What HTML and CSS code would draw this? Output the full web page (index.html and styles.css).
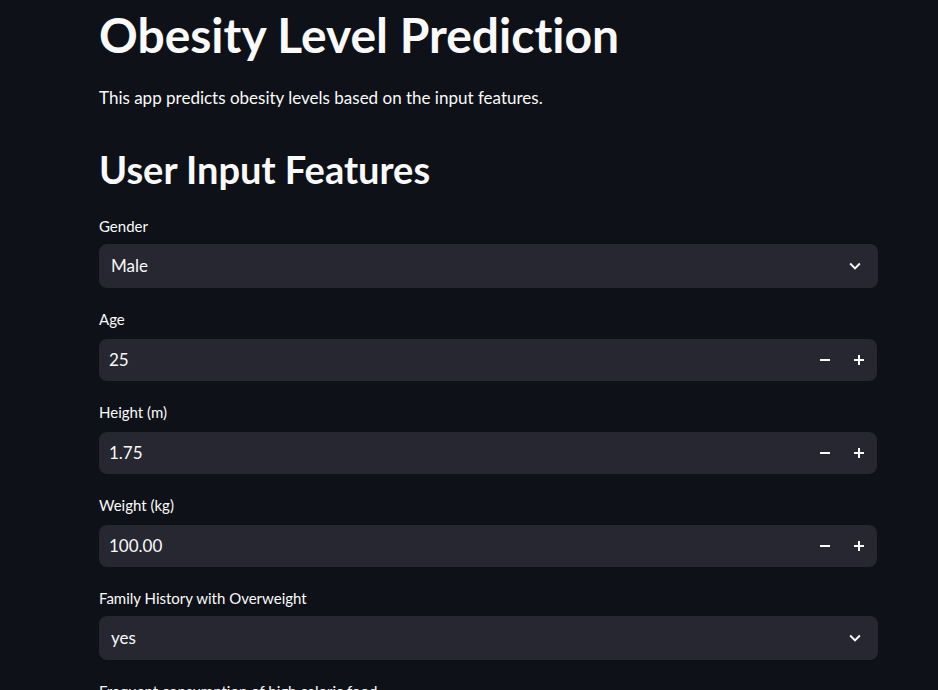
FILE: index.html
```html
<!DOCTYPE html>
<html>
<head>
<meta charset="utf-8">
<link rel="stylesheet" href="styles.css">
</head>
<body>
<main class="app">
  <h1 class="title">Obesity Level Prediction</h1>
  <p class="intro">This app predicts obesity levels based on the input features.</p>
  <h2 class="subtitle">User Input Features</h2>

  <div class="widget">
    <label class="label">Gender</label>
    <div class="select">
      <span class="value">Male</span>
      <svg class="chevron" viewBox="0 0 24 24" width="22" height="22"><path d="M7.41 8.59L12 13.17l4.59-4.58L18 10l-6 6-6-6 1.41-1.41z" fill="#fafafa"/></svg>
    </div>
  </div>

  <div class="widget">
    <label class="label">Age</label>
    <div class="number">
      <span class="value">25</span>
      <div class="steps">
        <span class="step"><svg viewBox="0 0 10 10" width="10" height="10"><rect x="0" y="4" width="10" height="2" fill="#fafafa"/></svg></span>
        <span class="step"><svg viewBox="0 0 10 10" width="10" height="10"><rect x="0" y="4" width="10" height="2" fill="#fafafa"/><rect x="4" y="0" width="2" height="10" fill="#fafafa"/></svg></span>
      </div>
    </div>
  </div>

  <div class="widget">
    <label class="label">Height (m)</label>
    <div class="number">
      <span class="value">1.75</span>
      <div class="steps">
        <span class="step"><svg viewBox="0 0 10 10" width="10" height="10"><rect x="0" y="4" width="10" height="2" fill="#fafafa"/></svg></span>
        <span class="step"><svg viewBox="0 0 10 10" width="10" height="10"><rect x="0" y="4" width="10" height="2" fill="#fafafa"/><rect x="4" y="0" width="2" height="10" fill="#fafafa"/></svg></span>
      </div>
    </div>
  </div>

  <div class="widget">
    <label class="label">Weight (kg)</label>
    <div class="number">
      <span class="value">100.00</span>
      <div class="steps">
        <span class="step"><svg viewBox="0 0 10 10" width="10" height="10"><rect x="0" y="4" width="10" height="2" fill="#fafafa"/></svg></span>
        <span class="step"><svg viewBox="0 0 10 10" width="10" height="10"><rect x="0" y="4" width="10" height="2" fill="#fafafa"/><rect x="4" y="0" width="2" height="10" fill="#fafafa"/></svg></span>
      </div>
    </div>
  </div>

  <div class="widget">
    <label class="label">Family History with Overweight</label>
    <div class="select">
      <span class="value">yes</span>
      <svg class="chevron" viewBox="0 0 24 24" width="22" height="22"><path d="M7.41 8.59L12 13.17l4.59-4.58L18 10l-6 6-6-6 1.41-1.41z" fill="#fafafa"/></svg>
    </div>
  </div>

  <div class="widget">
    <label class="label">Frequent consumption of high caloric food</label>
    <div class="select">
      <span class="value">yes</span>
      <svg class="chevron" viewBox="0 0 24 24" width="22" height="22"><path d="M7.41 8.59L12 13.17l4.59-4.58L18 10l-6 6-6-6 1.41-1.41z" fill="#fafafa"/></svg>
    </div>
  </div>
</main>
</body>
</html>
```
FILE: styles.css
```css
html, body {
  margin: 0;
  padding: 0;
  background: #0e1117;
  height: 100%;
  overflow: hidden;
}
body {
  font-family: Lato, "Liberation Sans", sans-serif;
  font-variant-ligatures: none;
  color: #fafafa;
}
.app {
  display: flex;
  flex-direction: column;
  padding: 6px 60px 0 99px;
}
.title {
  margin: 0;
  font-size: 48px;
  font-weight: 700;
  line-height: 1.2;
}
.intro {
  margin: 21px 0 0;
  font-size: 17px;
  line-height: 1.5;
}
.subtitle {
  margin: 37px 0 0;
  font-size: 38px;
  font-weight: 700;
  line-height: 1.2;
}
.widget {
  display: flex;
  flex-direction: column;
  margin-top: 20px;
}
.subtitle + .widget {
  margin-top: 22px;
}
.label {
  font-size: 15px;
  line-height: 22px;
}
.select {
  margin-top: 7px;
  height: 44px;
  background: #262730;
  border-radius: 8px;
  display: flex;
  align-items: center;
  justify-content: space-between;
  padding: 0 12px;
}
.chevron {
  display: block;
}
.number {
  margin-top: 9px;
  height: 42px;
  margin-right: 1px;
  background: #262730;
  border-radius: 8px;
  display: flex;
  align-items: center;
  justify-content: space-between;
  padding-left: 10px;
}
.value {
  font-size: 17px;
}
.steps {
  display: flex;
  padding-right: 1px;
}
.step {
  width: 34px;
  height: 42px;
  display: flex;
  align-items: center;
  justify-content: center;
}
.step svg {
  display: block;
}
```
